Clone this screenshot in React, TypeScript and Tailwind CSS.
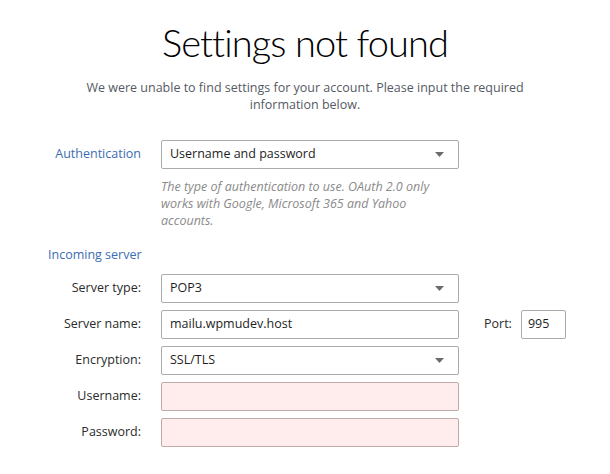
import React from "react"

const font = { fontFamily: '"Open Sans", "Noto Sans", sans-serif' }
const titleFont = { fontFamily: 'Lato, "Open Sans", sans-serif' }

function Caret() {
  return (
    <svg width="9" height="5" viewBox="0 0 9 5" className="shrink-0">
      <path d="M0 0 L9 0 L4.5 5 Z" fill="#6b6b6b" />
    </svg>
  )
}

function SelectBox({ value }: { value: string }) {
  return (
    <div className="flex h-[29px] w-[298px] items-center justify-between rounded-[2px] border border-[#ababab] bg-white pl-[8px] pr-[14px] text-[12.5px] text-[#1e1e1e]">
      <span>{value}</span>
      <Caret />
    </div>
  )
}

function TextBox({ value, invalid }: { value?: string; invalid?: boolean }) {
  return (
    <div
      className={
        invalid
          ? "flex h-[29px] w-[298px] items-center rounded-[2px] border border-[#bfa9a9] bg-[#ffeded] px-[8px] text-[12.5px]"
          : "flex h-[29px] w-[298px] items-center rounded-[2px] border border-[#ababab] bg-white px-[8px] text-[12.5px] text-[#1e1e1e]"
      }
    >
      {value}
    </div>
  )
}

function Row({ label, children }: { label: string; children: React.ReactNode }) {
  return (
    <div className="flex items-center">
      <div className="w-[141px] text-right text-[12.5px] text-[#2b2b2b]">{label}</div>
      <div className="ml-[20px] flex items-center">{children}</div>
    </div>
  )
}

export default function App() {
  return (
    <div className="min-h-[474px] w-[610px] bg-white" style={font}>
      <h1
        className="pt-[18px] text-center text-[38px] font-light leading-[48px] tracking-[-0.9px] text-black"
        style={titleFont}
      >
        Settings not found
      </h1>

      <p className="mx-auto mt-[13px] w-[470px] text-center text-[12.5px] leading-[17px] text-[#555a63]">
        We were unable to find settings for your account. Please input the required information below.
      </p>

      <div className="mt-[27px] flex items-center">
        <div className="w-[141px] text-right text-[12.5px] text-[#3b6db3]">Authentication</div>
        <div className="ml-[20px]">
          <SelectBox value="Username and password" />
        </div>
      </div>
      <p className="ml-[161px] mt-[9px] text-[12.5px] italic leading-[17px] text-[#8a8a8a]">
        The type of authentication to use. OAuth 2.0 only
        <br />
        works with Google, Microsoft 365 and Yahoo
        <br />
        accounts.
      </p>

      <div className="ml-[48px] mt-[17px] text-[12.5px] leading-[17px] text-[#3b6db3]">Incoming server</div>

      <div className="mt-[11px] flex flex-col gap-[7px]">
        <Row label="Server type:">
          <SelectBox value="POP3" />
        </Row>
        <Row label="Server name:">
          <TextBox value="mailu.wpmudev.host" />
          <span className="ml-[25px] text-[12.5px] text-[#2b2b2b]">Port:</span>
          <div className="ml-[9px] flex h-[29px] w-[45px] items-center rounded-[2px] border border-[#ababab] px-[6px] text-[12.5px] text-[#1e1e1e]">
            995
          </div>
        </Row>
        <Row label="Encryption:">
          <SelectBox value="SSL/TLS" />
        </Row>
        <Row label="Username:">
          <TextBox invalid />
        </Row>
        <Row label="Password:">
          <TextBox invalid />
        </Row>
      </div>
    </div>
  )
}
